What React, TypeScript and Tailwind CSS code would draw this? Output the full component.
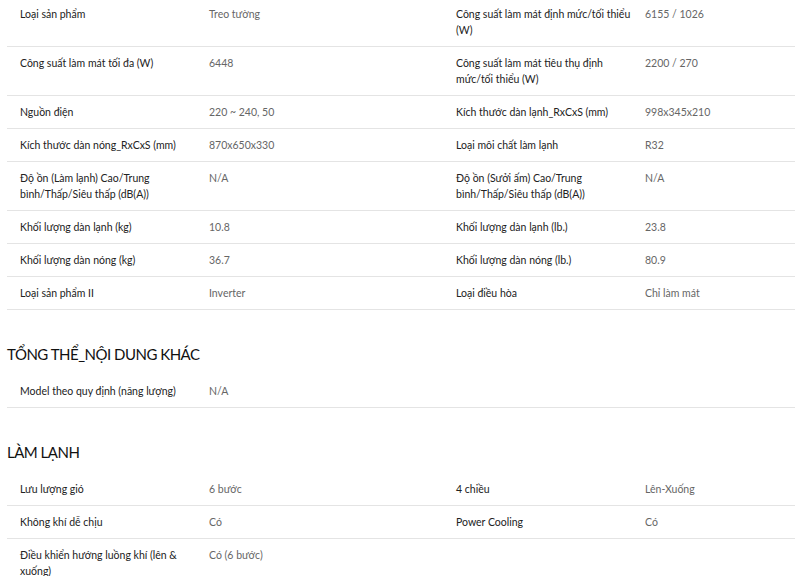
import React from 'react';

type Cell = [string, string];
type Row = { left: Cell; right?: Cell };

const mainSpecs: Row[] = [
  { left: ['Loại sản phẩm', 'Treo tường'], right: ['Công suất làm mát định mức/tối thiểu (W)', '6155 / 1026'] },
  { left: ['Công suất làm mát tối đa (W)', '6448'], right: ['Công suất làm mát tiêu thụ định mức/tối thiểu (W)', '2200 / 270'] },
  { left: ['Nguồn điện', '220 ~ 240, 50'], right: ['Kích thước dàn lạnh_RxCxS (mm)', '998x345x210'] },
  { left: ['Kích thước dàn nóng_RxCxS (mm)', '870x650x330'], right: ['Loại môi chất làm lạnh', 'R32'] },
  { left: ['Độ ồn (Làm lạnh) Cao/Trung bình/Thấp/Siêu thấp (dB(A))', 'N/A'], right: ['Độ ồn (Sưởi ấm) Cao/Trung bình/Thấp/Siêu thấp (dB(A))', 'N/A'] },
  { left: ['Khối lượng dàn lạnh (kg)', '10.8'], right: ['Khối lượng dàn lạnh (lb.)', '23.8'] },
  { left: ['Khối lượng dàn nóng (kg)', '36.7'], right: ['Khối lượng dàn nóng (lb.)', '80.9'] },
  { left: ['Loại sản phẩm II', 'Inverter'], right: ['Loại điều hòa', 'Chỉ làm mát'] },
];

const otherSpecs: Row[] = [{ left: ['Model theo quy định (năng lượng)', 'N/A'] }];

const coolingSpecs: Row[] = [
  { left: ['Lưu lượng gió', '6 bước'], right: ['4 chiều', 'Lên-Xuống'] },
  { left: ['Không khí dễ chịu', 'Có'], right: ['Power Cooling', 'Có'] },
  { left: ['Điều khiển hướng luồng khí (lên & xuống)', 'Có (6 bước)'] },
];

const Pair: React.FC<{ cell?: Cell }> = ({ cell }) => (
  <div className="flex w-[436px] shrink-0">
    <div className="w-[202px] shrink-0 pl-[13px] pr-[14px] text-[#222]">{cell?.[0]}</div>
    <div className="w-[234px] shrink-0 text-[#666]">{cell?.[1]}</div>
  </div>
);

const SpecTable: React.FC<{ rows: Row[]; open?: boolean }> = ({ rows, open }) => (
  <div>
    {rows.map((r, i) => (
      <div
        key={i}
        className={`flex py-2 leading-4 text-[10.5px] ${open && i === rows.length - 1 ? '' : 'border-b border-[#e4e4e4]'}`}
      >
        <Pair cell={r.left} />
        <Pair cell={r.right} />
      </div>
    ))}
  </div>
);

const Heading: React.FC<{ children: React.ReactNode }> = ({ children }) => (
  <h2 className="mt-[34px] mb-[11px] text-[15px] leading-5 tracking-[-0.5px] text-[#111] uppercase">{children}</h2>
);

export default function App() {
  return (
    <div className="w-[795px] h-[576px] overflow-hidden bg-white" style={{ fontFamily: 'Lato, sans-serif' }}>
      <div className="w-[879px] pl-[7px] -mt-[2px]">
        <SpecTable rows={mainSpecs} />
        <Heading>Tổng thể_Nội dung khác</Heading>
        <SpecTable rows={otherSpecs} />
        <Heading>Làm lạnh</Heading>
        <SpecTable rows={coolingSpecs} open />
      </div>
    </div>
  );
}
